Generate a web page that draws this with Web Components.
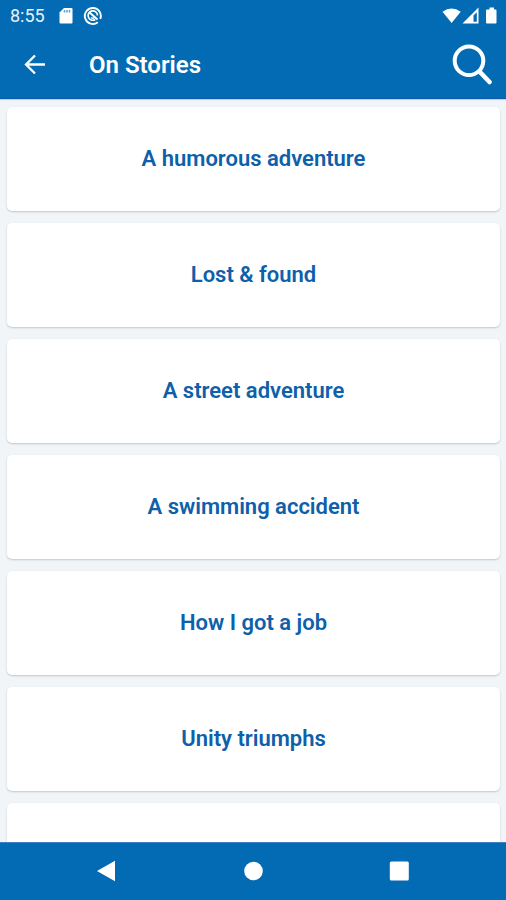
<!DOCTYPE html>
<html lang="en">
<head>
<meta charset="utf-8">
<meta name="viewport" content="width=device-width, initial-scale=1">
<title>On Stories</title>
<style>
  html, body { height: 100%; margin: 0; }
  body { font-family: Roboto, "Liberation Sans", sans-serif; }
</style>
</head>
<body>
<story-app>
  <status-bar slot="top" time="8:55"></status-bar>
  <app-bar slot="top">On Stories</app-bar>
  <story-card>A humorous adventure</story-card>
  <story-card>Lost &amp; found</story-card>
  <story-card>A street adventure</story-card>
  <story-card>A swimming accident</story-card>
  <story-card>How I got a job</story-card>
  <story-card>Unity triumphs</story-card>
  <story-card></story-card>
  <nav-bar slot="bottom"></nav-bar>
</story-app>

<script>
  const define = (name, html, setup) => {
    const template = document.createElement('template');
    template.innerHTML = html;
    customElements.define(name, class extends HTMLElement {
      constructor() {
        super();
        this.attachShadow({ mode: 'open' }).append(template.content.cloneNode(true));
      }
      connectedCallback() { if (setup) setup(this); }
    });
  };

  define('story-app', `
    <style>
      :host { --blue: #026bb3; --ink: #0d60aa; display: flex; flex-direction: column; height: 100vh; background: #f1f5f8; }
      header, footer { flex: none; background: var(--blue); color: #fff; }
      header { border-bottom: 1px solid #0a5cab; box-shadow: 0 1px 1px #c3d3e6; }
      footer { border-top: 1px solid #3c7fc4; }
      main { flex: 1; min-height: 0; overflow: hidden; display: flex; flex-direction: column; gap: 12px; padding: 8px 6px 0 7px; }
    </style>
    <header><slot name="top"></slot></header>
    <main><slot></slot></main>
    <footer><slot name="bottom"></slot></footer>`);

  define('status-bar', `
    <style>
      :host { display: flex; align-items: center; justify-content: space-between; height: 32px; padding: 0 8px 0 10px; font-size: 18px; line-height: 32px; color: #e6f1fa; }
      div { display: flex; align-items: center; }
      .left { gap: 10px; }
      time { margin-right: 4px; }
      svg { display: block; }
    </style>
    <div class="left">
      <time></time>
      <svg width="14" height="18" viewBox="0 0 14 18" aria-hidden="true"><path d="M5 1h7.500q1 0 1 1v13.500q0 1-1 1h-11q-1 0-1-1v-10z" fill="#fff"/><path d="M5.500 3v2.500M8 3v2.500M10.500 3v2.500" stroke="#5b9fd0" stroke-width="1.500"/></svg>
      <svg width="20" height="20" viewBox="0 0 20 20" fill="none" stroke="#fff" aria-hidden="true"><path d="M14.800 16.200A8 8 0 1 1 17.300 12.800" stroke-width="1.900"/><path d="M12.300 13.500A4.700 4.700 0 1 1 14.500 9.500" stroke-width="1.700"/><path d="M6.500 6.500l8 7" stroke-width="1.900"/><path d="M8 11.500q2 1.500 3.500 0" stroke-width="1.500"/></svg>
    </div>
    <div>
      <svg width="56" height="18" viewBox="0 0 56 18" fill="#fff" aria-hidden="true">
        <path d="M.500 4.700Q9.500-1.500 18.700 4.700L9.600 16z"/>
        <path d="M20.500 16.500L36.500 .500v16z"/><path d="M31.500 8.500l3.300-3.300v9.600h-3.300z" fill="#026bb3"/>
        <path d="M47.500 .500h4.500v2h1.500q1 0 1 1v12q0 1-1 1h-8.500q-1 0-1-1v-12q0-1 1-1h2.500z"/>
      </svg>
    </div>`, el => { el.shadowRoot.querySelector('time').textContent = el.getAttribute('time'); });

  define('app-bar', `
    <style>
      :host { display: flex; align-items: center; height: 66px; padding: 0 14px 0 15px; }
      button { display: grid; place-items: center; width: 40px; height: 48px; margin: 0; padding: 0; border: 0; background: none; color: inherit; }
      h1 { flex: 1; margin: 0 0 0 34px; font-size: 24px; line-height: 32px; font-weight: 600; }
    </style>
    <button type="button" aria-label="Back">
      <svg width="22" height="22" viewBox="0 0 22 22" fill="none" stroke="#fff" stroke-width="2.300" aria-hidden="true"><path d="M21 10.500H3M11 1.500l-9 9 9 9"/></svg>
    </button>
    <h1><slot></slot></h1>
    <button type="button" aria-label="Search">
      <svg width="40" height="44" viewBox="0 0 40 44" fill="none" stroke="#fff" stroke-width="4" aria-hidden="true"><circle cx="17" cy="17.700" r="14.300"/><path d="M27.500 28.500l10 10.500" stroke-width="4.600" stroke-linecap="round"/></svg>
    </button>`);

  define('story-card', `
    <style>
      :host { display: block; flex: none; }
      button { display: block; width: 100%; height: 104px; margin: 0; padding: 0 16px; border: 0; border-radius: 5px; background: #fff; box-shadow: 0 1px 2px #bfc6cb; color: var(--ink); font: inherit; font-size: 22px; line-height: 28px; font-weight: 600; text-align: center; }
    </style>
    <button type="button"><slot></slot></button>`);

  define('nav-bar', `
    <style>
      :host { display: flex; justify-content: center; align-items: center; gap: 98px; height: 55px; padding-bottom: 2px; }
      button { display: grid; place-items: center; width: 48px; height: 48px; margin: 0; padding: 0; border: 0; background: none; }
    </style>
    <button type="button" aria-label="Back"><svg width="20" height="22" viewBox="0 0 20 22" aria-hidden="true"><path d="M0 11L18 .700v20.600z" fill="#fff"/></svg></button>
    <button type="button" aria-label="Home"><svg width="20" height="20" viewBox="0 0 20 20" aria-hidden="true"><circle cx="10.500" cy="10" r="9.300" fill="#fff"/></svg></button>
    <button type="button" aria-label="Recent apps"><svg width="20" height="20" viewBox="0 0 20 20" aria-hidden="true"><rect x=".800" y=".500" width="19" height="19" rx="1.500" fill="#fff"/></svg></button>`);
</script>
</body>
</html>
